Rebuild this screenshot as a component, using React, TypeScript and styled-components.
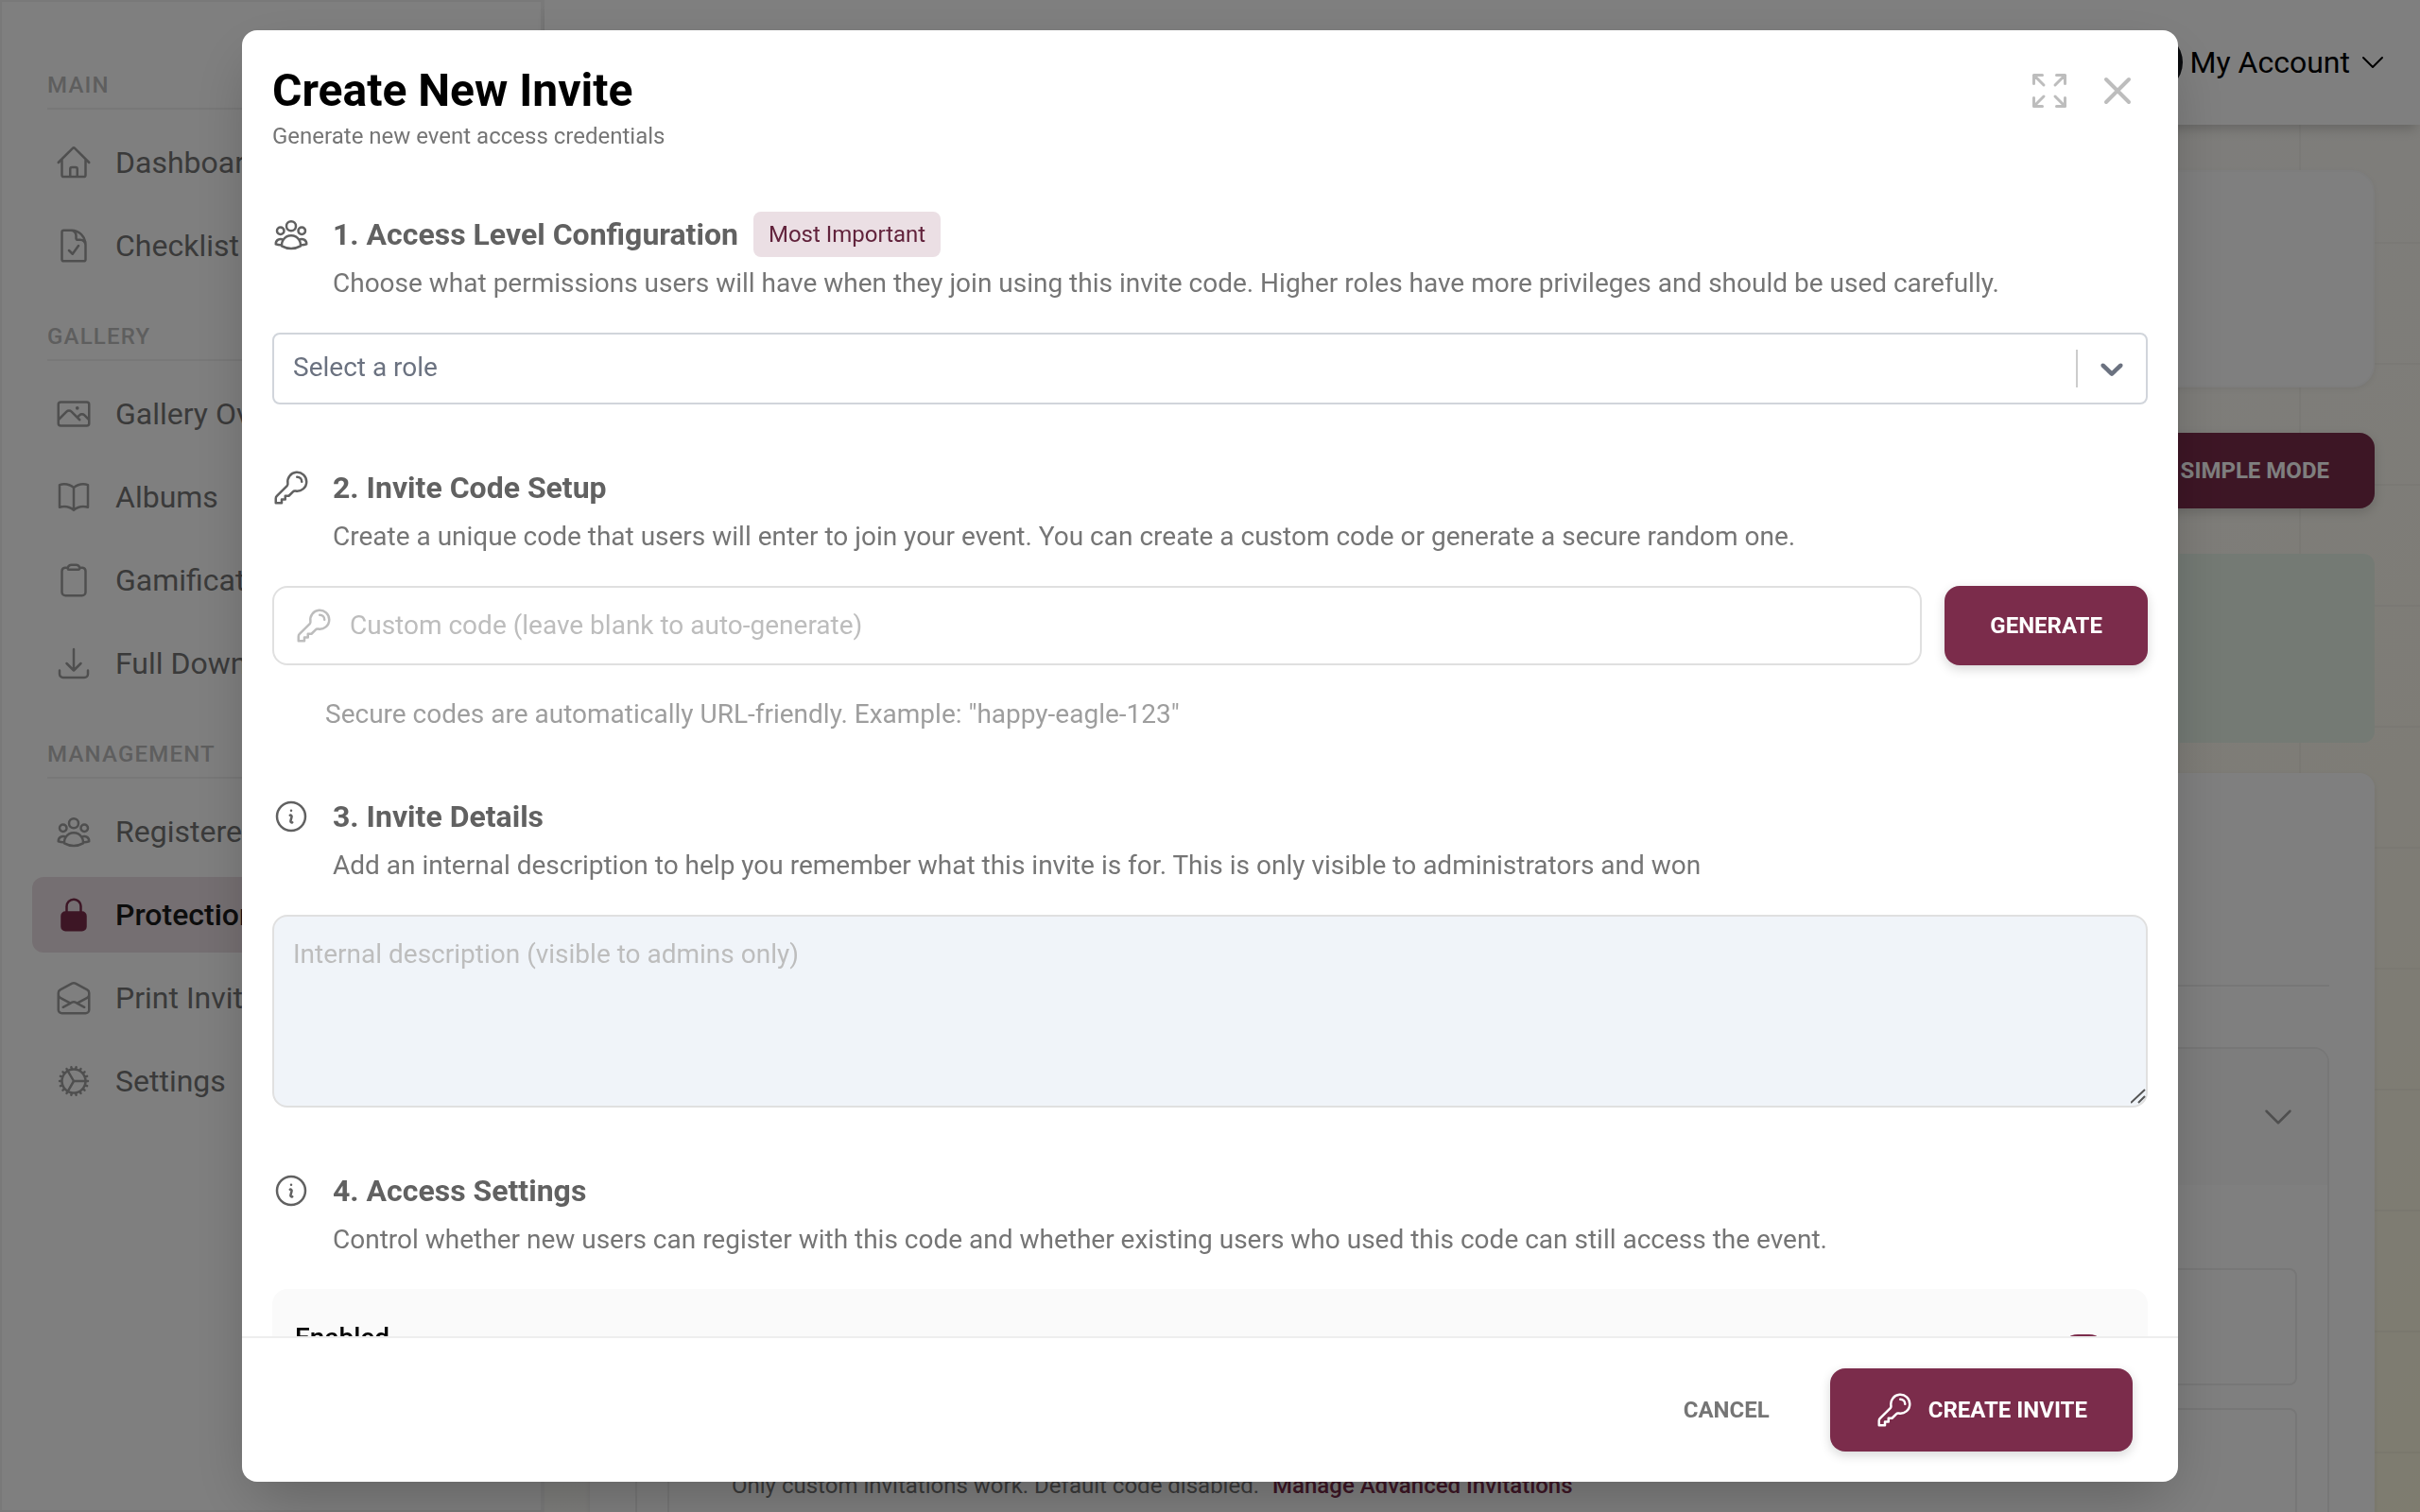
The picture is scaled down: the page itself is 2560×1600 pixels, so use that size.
import React from "react";
import styled, { createGlobalStyle, css } from "styled-components";
import {
  HiLockClosed,
  HiOutlineArrowDownTray,
  HiOutlineArrowsPointingOut,
  HiOutlineBookOpen,
  HiOutlineChevronDown,
  HiOutlineClipboard,
  HiOutlineCog,
  HiOutlineDocumentCheck,
  HiOutlineEnvelopeOpen,
  HiOutlineHome,
  HiOutlineInformationCircle,
  HiOutlineKey,
  HiOutlinePhoto,
  HiOutlineUserGroup,
  HiOutlineXMark,
} from "react-icons/hi2";

const color = {
  brand: "#7b2c4b",
  brandSoft: "#ebdfe4",
  heading: "#616161",
  text: "#757575",
  muted: "#9e9e9e",
  placeholder: "#bdbdbd",
  border: "#e0e0e0",
  line: "#eeeeee",
};

const GlobalStyle = createGlobalStyle`
  *, *::before, *::after { box-sizing: border-box; }
  body {
    margin: 0;
    font-family: Roboto, "Liberation Sans", sans-serif;
    font-size: 28px;
    line-height: 40px;
    color: #000;
  }
  h1, h2, p, ul { margin: 0; padding: 0; }
  ul { list-style: none; }
  button, input, select, textarea { font: inherit; margin: 0; }
  button { cursor: pointer; }
`;

/* ---------- Page ---------- */

const Page = styled.div`
  display: flex;
  height: 100vh;
  overflow: hidden;
  background-image:
    linear-gradient(rgba(0, 0, 0, 0.03) 2px, transparent 2px),
    linear-gradient(90deg, rgba(0, 0, 0, 0.03) 2px, transparent 2px),
    linear-gradient(135deg, #ffffff 0%, #fdfcf9 52%, #fcfaf4 66%, #fcf9ec 82%, #fdf9df 100%);
  background-size: 128px 128px, 128px 128px, 100% 100%;
`;

const Sidebar = styled.nav`
  flex: none;
  width: 576px;
  padding: 72px 32px;
  display: flex;
  flex-direction: column;
  gap: 40px;
  background: #fff;
  border: 2px solid #f3f3f3;
  border-right-width: 4px;
`;

const NavLabel = styled.h2`
  margin: 0 16px 16px;
  padding-bottom: 8px;
  border-bottom: 2px solid #f0f0f0;
  font-size: 24px;
  line-height: 32px;
  font-weight: 500;
  letter-spacing: 0.05em;
  text-transform: uppercase;
  color: ${color.placeholder};
`;

const NavList = styled.ul`
  display: flex;
  flex-direction: column;
  gap: 8px;
`;

const NavLink = styled.a<{ $active?: boolean }>`
  display: flex;
  align-items: center;
  gap: 24px;
  height: 80px;
  padding: 0 24px;
  border-radius: 12px;
  font-size: 32px;
  line-height: 46px;
  color: ${color.text};
  text-decoration: none;
  white-space: nowrap;
  svg { color: ${color.muted}; }
  ${(p) =>
    p.$active &&
    css`
      background: ${color.brandSoft};
      color: #1a1a1a;
      font-weight: 500;
      svg { color: ${color.brand}; }
    `}
`;

const Column = styled.div`
  flex: 1;
  min-width: 0;
  display: flex;
  flex-direction: column;
`;

const TopBar = styled.header`
  flex: none;
  display: flex;
  align-items: center;
  justify-content: flex-end;
  height: 132px;
  padding: 0 34px;
  background: #fff;
  box-shadow: 0 8px 12px -4px rgba(0, 0, 0, 0.2);
`;

const AccountButton = styled.button`
  display: flex;
  align-items: center;
  gap: 8px;
  padding: 0;
  border: 0;
  background: none;
  font-size: 32px;
  line-height: 48px;
  color: #000;
`;

const Avatar = styled.span`
  width: 64px;
  height: 64px;
  border-radius: 50%;
  background: #14161c;
`;

const Main = styled.main`
  flex: none;
  display: flex;
  flex-direction: column;
  padding: 48px;
`;

const HeroCard = styled.section`
  height: 230px;
  margin-bottom: 48px;
  border: 2px solid #fafafa;
  border-radius: 24px;
  background: #fff;
  box-shadow: 0 2px 6px rgba(0, 0, 0, 0.06);
`;

const SuccessBanner = styled.section`
  height: 200px;
  margin: 48px 0 32px;
  border-radius: 12px;
  background: #e8f5e9;
`;

const InviteCard = styled.section`
  padding: 224px 48px 48px;
  border-radius: 16px;
  background: #fff;
  box-shadow: 0 2px 6px rgba(0, 0, 0, 0.08);
`;

const InvitePanel = styled.div`
  border: 2px solid ${color.line};
  border-radius: 16px;
  overflow: hidden;
`;

const CardRule = styled.hr`
  margin: 0 0 64px;
  border: 0;
  border-top: 2px solid ${color.line};
`;

const PanelToggle = styled.button`
  display: flex;
  align-items: center;
  justify-content: flex-end;
  width: 100%;
  height: 144px;
  padding: 0 32px;
  border: 0;
  background: #fafafa;
  color: ${color.muted};
`;

const PanelBody = styled.div`
  display: flex;
  flex-direction: column;
  gap: 24px;
  padding: 88px 32px 32px;
`;

const OptionBox = styled.div`
  display: flex;
  align-items: center;
  min-height: 124px;
  padding: 0 66px;
  border: 2px solid ${color.line};
  border-radius: 8px;
  font-size: 24px;
  line-height: 32px;
  color: ${color.text};
  a {
    margin-left: 14px;
    color: ${color.brand};
    font-weight: 500;
    text-decoration: none;
  }
`;

const OptionNote = styled(OptionBox)`
  height: 164px;
`;

/* ---------- Buttons ---------- */

const SolidButton = styled.button<{ $height: number }>`
  display: flex;
  align-items: center;
  justify-content: center;
  flex: none;
  gap: 16px;
  height: ${(p) => p.$height}px;
  padding: 0 48px;
  border: 0;
  border-radius: 16px;
  background: ${color.brand};
  box-shadow: 0 4px 12px rgba(0, 0, 0, 0.16);
  color: #fff;
  font-size: 24px;
  line-height: 32px;
  font-weight: 700;
  text-transform: uppercase;
`;

const ModeButton = styled(SolidButton)`
  align-self: flex-end;
`;

const TextButton = styled(SolidButton)`
  background: none;
  box-shadow: none;
  color: ${color.text};
`;

const IconButton = styled.button`
  display: grid;
  place-items: center;
  width: 64px;
  height: 64px;
  padding: 0;
  border: 0;
  background: none;
  color: ${color.placeholder};
`;

const CloseIcon = styled(HiOutlineXMark)`
  path { stroke-width: 2; }
`;

/* ---------- Modal ---------- */

const Overlay = styled.div`
  position: fixed;
  inset: 0;
  display: grid;
  place-items: center;
  background: rgba(0, 0, 0, 0.5);
`;

const Modal = styled.div`
  display: flex;
  flex-direction: column;
  width: 80vw;
  height: 96vh;
  border-radius: 16px;
  background: #fff;
  box-shadow: 0 24px 64px -12px rgba(0, 0, 0, 0.25);
  overflow: hidden;
`;

const ModalHeader = styled.header`
  display: flex;
  justify-content: space-between;
  padding: 32px;
`;

const ModalTitle = styled.h1`
  font-size: 48px;
  line-height: 64px;
  font-weight: 700;
`;

const ModalSubtitle = styled.p`
  font-size: 24px;
  line-height: 32px;
  color: ${color.text};
`;

const HeaderActions = styled.div`
  display: flex;
  gap: 8px;
`;

const ModalBody = styled.form`
  flex: 1;
  min-height: 0;
  display: flex;
  flex-direction: column;
  gap: 64px;
  padding: 32px;
  overflow-y: auto;
  scrollbar-width: none;
`;

const Section = styled.section`
  flex: none;
  display: flex;
  flex-direction: column;
  gap: 32px;
`;

const SectionHead = styled.div`
  display: grid;
  grid-template-columns: 40px 1fr;
  column-gap: 24px;
  row-gap: 8px;
  color: ${color.heading};
  > svg { align-self: center; }
`;

const SectionTitle = styled.div`
  display: flex;
  align-items: center;
  gap: 16px;
  height: 48px;
  h2 {
    font-size: 32px;
    line-height: 46px;
    font-weight: 700;
  }
`;

const SectionText = styled.p`
  grid-column: 2;
  color: ${color.text};
`;

const Badge = styled.span`
  padding: 8px 16px;
  border-radius: 8px;
  background: ${color.brandSoft};
  color: #62233c;
  font-size: 24px;
  line-height: 32px;
`;

const SelectBox = styled.div`
  display: grid;
  grid-template-columns: 1fr 74px;
  align-items: center;
  height: 76px;
  border: 2px solid #d1d5db;
  border-radius: 8px;
  color: #6b7280;
`;

const RoleSelect = styled.select`
  grid-row: 1;
  grid-column: 1 / -1;
  appearance: none;
  height: 72px;
  padding: 0 20px 2px;
  border: 0;
  background: none;
  color: inherit;
`;

const SelectArrow = styled.span`
  grid-row: 1;
  grid-column: 2;
  display: grid;
  place-items: center;
  height: 40px;
  border-left: 2px solid #cccccc;
  pointer-events: none;
`;

const FieldRow = styled.div`
  display: flex;
  gap: 24px;
`;

const CodeField = styled.label`
  flex: 1;
  display: flex;
  align-items: center;
  gap: 16px;
  height: 84px;
  padding: 0 22px;
  border: 2px solid ${color.border};
  border-radius: 16px;
  color: ${color.placeholder};
  input {
    flex: 1;
    min-width: 0;
    height: 40px;
    padding: 0 2px;
    border: 0;
    outline: 0;
    background: none;
  }
  input::placeholder { color: ${color.placeholder}; opacity: 1; }
`;

const Hint = styled.p`
  padding-left: 56px;
  color: ${color.muted};
`;

const AreaBox = styled.div`
  position: relative;
`;

const DescriptionArea = styled.textarea`
  display: block;
  width: 100%;
  height: 204px;
  padding: 20px;
  border: 2px solid ${color.border};
  border-radius: 16px;
  background: #f0f4f9;
  resize: none;
  &::placeholder { color: ${color.placeholder}; opacity: 1; }
`;

const AreaGrip = styled.svg`
  position: absolute;
  right: 2px;
  bottom: 4px;
  pointer-events: none;
`;

const SwitchRow = styled.label`
  display: flex;
  align-items: center;
  justify-content: space-between;
  padding: 32px 44px 32px 24px;
  border-radius: 16px;
  background: #fafafa;
  font-weight: 500;
`;

const SwitchText = styled.span`
  height: 80px;
`;

const SwitchInput = styled.input`
  appearance: none;
  width: 48px;
  height: 48px;
  margin: 0;
  border-radius: 18px;
  background: ${color.brand};
`;

const ModalFooter = styled.footer`
  flex: none;
  display: flex;
  justify-content: flex-end;
  gap: 16px;
  padding: 32px 48px;
  border-top: 2px solid ${color.line};
`;

/* ---------- Content ---------- */

type Icon = React.ComponentType<{ size?: number }>;
type NavEntry = { label: string; icon: Icon; active?: boolean };

const navigation: { title: string; items: NavEntry[] }[] = [
  {
    title: "Main",
    items: [
      { label: "Dashboard", icon: HiOutlineHome },
      { label: "Checklist", icon: HiOutlineDocumentCheck },
    ],
  },
  {
    title: "Gallery",
    items: [
      { label: "Gallery Overview", icon: HiOutlinePhoto },
      { label: "Albums", icon: HiOutlineBookOpen },
      { label: "Gamification", icon: HiOutlineClipboard },
      { label: "Full Download", icon: HiOutlineArrowDownTray },
    ],
  },
  {
    title: "Management",
    items: [
      { label: "Registered Users", icon: HiOutlineUserGroup },
      { label: "Protection", icon: HiLockClosed, active: true },
      { label: "Print Invitations", icon: HiOutlineEnvelopeOpen },
      { label: "Settings", icon: HiOutlineCog },
    ],
  },
];

function FormSection(props: {
  icon: Icon;
  title: string;
  text: string;
  badge?: string;
  children: React.ReactNode;
}) {
  const SectionIcon = props.icon;
  return (
    <Section>
      <SectionHead>
        <SectionIcon size={40} />
        <SectionTitle>
          <h2>{props.title}</h2>
          {props.badge && <Badge>{props.badge}</Badge>}
        </SectionTitle>
        <SectionText>{props.text}</SectionText>
      </SectionHead>
      {props.children}
    </Section>
  );
}

function SelectChevron() {
  return (
    <svg width="40" height="40" viewBox="0 0 20 20" fill="currentColor" aria-hidden="true">
      <path d="M4.516 7.548c0.436-0.446 1.043-0.481 1.576 0l3.908 3.747 3.908-3.747c0.533-0.481 1.141-0.446 1.574 0 0.436 0.445 0.408 1.197 0 1.615-0.406 0.418-4.695 4.502-4.695 4.502-0.217 0.223-0.502 0.335-0.787 0.335s-0.57-0.112-0.789-0.335c0 0-4.287-4.084-4.695-4.502s-0.436-1.17 0-1.615z" />
    </svg>
  );
}

function EventPage() {
  return (
    <Page>
      <Sidebar>
        {navigation.map((group) => (
          <div key={group.title}>
            <NavLabel>{group.title}</NavLabel>
            <NavList>
              {group.items.map(({ label, icon: ItemIcon, active }) => (
                <li key={label}>
                  <NavLink href="#" $active={active}>
                    <ItemIcon size={40} />
                    {label}
                  </NavLink>
                </li>
              ))}
            </NavList>
          </div>
        ))}
      </Sidebar>
      <Column>
        <TopBar>
          <AccountButton>
            <Avatar />
            My Account
            <HiOutlineChevronDown size={32} />
          </AccountButton>
        </TopBar>
        <Main>
          <HeroCard />
          <ModeButton $height={80}>Simple Mode</ModeButton>
          <SuccessBanner />
          <InviteCard>
            <CardRule />
            <InvitePanel>
              <PanelToggle aria-label="Toggle invitations">
                <HiOutlineChevronDown size={40} />
              </PanelToggle>
              <PanelBody>
                <OptionBox />
                <OptionNote>
                  Only custom invitations work. Default code disabled.
                  <a href="#">Manage Advanced Invitations</a>
                </OptionNote>
              </PanelBody>
            </InvitePanel>
          </InviteCard>
        </Main>
      </Column>
    </Page>
  );
}

function InviteModal() {
  return (
    <Overlay>
      <Modal role="dialog" aria-modal="true" aria-labelledby="invite-title">
        <ModalHeader>
          <div>
            <ModalTitle id="invite-title">Create New Invite</ModalTitle>
            <ModalSubtitle>Generate new event access credentials</ModalSubtitle>
          </div>
          <HeaderActions>
            <IconButton aria-label="Expand">
              <HiOutlineArrowsPointingOut size={48} />
            </IconButton>
            <IconButton aria-label="Close">
              <CloseIcon size={48} />
            </IconButton>
          </HeaderActions>
        </ModalHeader>
        <ModalBody id="invite-form">
          <FormSection
            icon={HiOutlineUserGroup}
            title="1. Access Level Configuration"
            badge="Most Important"
            text="Choose what permissions users will have when they join using this invite code. Higher roles have more privileges and should be used carefully."
          >
            <SelectBox>
              <RoleSelect aria-label="Role" defaultValue="">
                <option value="">Select a role</option>
              </RoleSelect>
              <SelectArrow>
                <SelectChevron />
              </SelectArrow>
            </SelectBox>
          </FormSection>
          <FormSection
            icon={HiOutlineKey}
            title="2. Invite Code Setup"
            text="Create a unique code that users will enter to join your event. You can create a custom code or generate a secure random one."
          >
            <FieldRow>
              <CodeField>
                <HiOutlineKey size={40} />
                <input
                  type="text"
                  aria-label="Custom code"
                  placeholder="Custom code (leave blank to auto-generate)"
                />
              </CodeField>
              <SolidButton type="button" $height={84}>
                Generate
              </SolidButton>
            </FieldRow>
            <Hint>Secure codes are automatically URL-friendly. Example: "happy-eagle-123"</Hint>
          </FormSection>
          <FormSection
            icon={HiOutlineInformationCircle}
            title="3. Invite Details"
            text="Add an internal description to help you remember what this invite is for. This is only visible to administrators and won"
          >
            <AreaBox>
              <DescriptionArea
                aria-label="Internal description"
                placeholder="Internal description (visible to admins only)"
              />
              <AreaGrip width="16" height="16" viewBox="0 0 16 16" stroke="#555" strokeWidth="2" aria-hidden="true">
                <path d="M0 15L15 1M8 15L15 8" />
              </AreaGrip>
            </AreaBox>
          </FormSection>
          <FormSection
            icon={HiOutlineInformationCircle}
            title="4. Access Settings"
            text="Control whether new users can register with this code and whether existing users who used this code can still access the event."
          >
            <SwitchRow>
              <SwitchText>Enabled</SwitchText>
              <SwitchInput type="checkbox" defaultChecked />
            </SwitchRow>
          </FormSection>
        </ModalBody>
        <ModalFooter>
          <TextButton type="button" $height={88}>
            Cancel
          </TextButton>
          <SolidButton type="submit" form="invite-form" $height={88}>
            <HiOutlineKey size={40} />
            Create Invite
          </SolidButton>
        </ModalFooter>
      </Modal>
    </Overlay>
  );
}

export default function App() {
  return (
    <>
      <GlobalStyle />
      <EventPage />
      <InviteModal />
    </>
  );
}
